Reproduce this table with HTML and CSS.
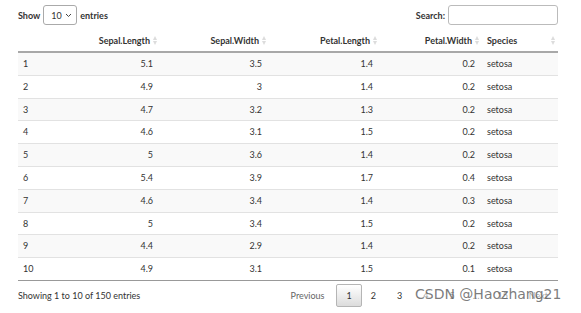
FILE: index.html
```html
<!DOCTYPE html>
<html lang="en">
<head>
    <meta charset="UTF-8">
    <title>iris</title>
    <link rel="stylesheet" href="styles.css">
</head>
<body>
    <div class="wrapper">
        <div class="top-bar">
            <label class="length">Show
                <span class="select-box">10
                    <svg class="caret" width="7" height="5" viewBox="0 0 7 5"><path d="M1 1 L3.5 3.5 L6 1" fill="none" stroke="#444" stroke-width="1"/></svg>
                </span>
                entries</label>
            <label class="filter">Search: <span class="search-box"></span></label>
        </div>

        <table class="data-table">
            <colgroup>
                <col style="width:50px">
                <col style="width:90px">
                <col style="width:109px">
                <col style="width:111px">
                <col style="width:102px">
                <col style="width:78px">
            </colgroup>
            <thead>
                <tr>
                    <th></th>
                    <th class="num sorting">Sepal.Length</th>
                    <th class="num sorting">Sepal.Width</th>
                    <th class="num sorting">Petal.Length</th>
                    <th class="num sorting">Petal.Width</th>
                    <th class="sorting species">Species</th>
                </tr>
            </thead>
            <tbody>
                <tr><td>1</td><td class="num">5.1</td><td class="num">3.5</td><td class="num">1.4</td><td class="num">0.2</td><td class="species">setosa</td></tr>
                <tr><td>2</td><td class="num">4.9</td><td class="num">3</td><td class="num">1.4</td><td class="num">0.2</td><td class="species">setosa</td></tr>
                <tr><td>3</td><td class="num">4.7</td><td class="num">3.2</td><td class="num">1.3</td><td class="num">0.2</td><td class="species">setosa</td></tr>
                <tr><td>4</td><td class="num">4.6</td><td class="num">3.1</td><td class="num">1.5</td><td class="num">0.2</td><td class="species">setosa</td></tr>
                <tr><td>5</td><td class="num">5</td><td class="num">3.6</td><td class="num">1.4</td><td class="num">0.2</td><td class="species">setosa</td></tr>
                <tr><td>6</td><td class="num">5.4</td><td class="num">3.9</td><td class="num">1.7</td><td class="num">0.4</td><td class="species">setosa</td></tr>
                <tr><td>7</td><td class="num">4.6</td><td class="num">3.4</td><td class="num">1.4</td><td class="num">0.3</td><td class="species">setosa</td></tr>
                <tr><td>8</td><td class="num">5</td><td class="num">3.4</td><td class="num">1.5</td><td class="num">0.2</td><td class="species">setosa</td></tr>
                <tr><td>9</td><td class="num">4.4</td><td class="num">2.9</td><td class="num">1.4</td><td class="num">0.2</td><td class="species">setosa</td></tr>
                <tr><td>10</td><td class="num">4.9</td><td class="num">3.1</td><td class="num">1.5</td><td class="num">0.1</td><td class="species">setosa</td></tr>
            </tbody>
        </table>

        <div class="bottom-bar">
            <div class="info">Showing 1 to 10 of 150 entries</div>
            <div class="paginate">
                <span class="page-btn prev">Previous</span>
                <span class="page-btn current">1</span>
                <span class="page-btn">2</span>
                <span class="page-btn">3</span>
                <span class="page-btn">4</span>
                <span class="page-btn">5</span>
                <span class="page-btn ellipsis">…</span>
                <span class="page-btn">15</span>
                <span class="page-btn">Next</span>
            </div>
        </div>
    </div>
    <div class="watermark">CSDN @Haozhang21</div>
</body>
</html>
```

FILE: styles.css
```css
body {
    margin: 0;
    font-family: Lato, 'Open Sans', sans-serif;
    font-size: 9px;
    color: #333;
    background: #fff;
}

.wrapper {
    width: 540px;
    padding: 5px 18px 0 18px;
}

.top-bar {
    display: flex;
    justify-content: space-between;
    align-items: center;
    height: 20px;
    margin-bottom: 5px;
}

.length,
.filter {
    display: flex;
    align-items: center;
    gap: 3px;
    font-weight: bold;
}

.select-box {
    display: inline-flex;
    align-items: center;
    justify-content: space-between;
    box-sizing: border-box;
    width: 34px;
    height: 20px;
    padding: 0 4px 0 7px;
    border: 1px solid #aaa;
    border-radius: 3px;
    font-weight: normal;
}

.search-box {
    display: inline-block;
    box-sizing: border-box;
    width: 110px;
    height: 20px;
    border: 1px solid #bbb;
    border-radius: 3px;
}

.data-table {
    width: 540px;
    border-collapse: collapse;
    table-layout: fixed;
}

.data-table th {
    font-weight: bold;
    text-align: left;
    padding: 4px 8px 4px 5px;
    line-height: 13px;
    border-bottom: 2px solid #a8a8a8;
    position: relative;
}

.data-table th.num {
    text-align: right;
}

/* faint up/down sort arrows */
.data-table th.sorting::before,
.data-table th.sorting::after {
    content: "";
    position: absolute;
    right: 1px;
    width: 0;
    height: 0;
    border-left: 2px solid transparent;
    border-right: 2px solid transparent;
}

.data-table th.sorting::before {
    top: 6px;
    border-bottom: 4px solid #dcdcdc;
}

.data-table th.sorting::after {
    top: 11px;
    border-top: 4px solid #dcdcdc;
}

.data-table td {
    padding: 4px 5px;
    line-height: 13.8px;
    border-bottom: 1px solid #e2e2e2;
}

.data-table .species {
    padding-left: 7px;
}

.data-table th.species::before,
.data-table th.species::after {
    right: 3px;
}

.data-table tbody tr:nth-child(odd) {
    background: #f9f9f9;
}

.data-table tbody tr:last-child td {
    border-bottom-color: #999;
}

.data-table td.num {
    text-align: right;
}

.bottom-bar {
    display: flex;
    justify-content: space-between;
    align-items: center;
    padding-top: 3px;
}

.paginate {
    display: flex;
    align-items: center;
}

.page-btn {
    box-sizing: border-box;
    padding: 5px 9px;
    margin-left: 1px;
    line-height: 11px;
    color: #333;
    border: 1px solid transparent;
    border-radius: 2px;
}

.page-btn.prev {
    color: #666;
    margin-right: 1px;
}

.page-btn.ellipsis {
    padding: 5px 6px;
}

.page-btn.current {
    background: linear-gradient(#fff, #dcdcdc);
    border-color: #b5b5b5;
    margin-right: -2px;
}

.watermark {
    position: absolute;
    left: 415px;
    top: 286px;
    font-family: 'DejaVu Sans', sans-serif;
    font-size: 14px;
    color: rgba(90, 90, 90, 0.8);
    background: rgba(255, 255, 255, 0.55);
    white-space: nowrap;
}
```
